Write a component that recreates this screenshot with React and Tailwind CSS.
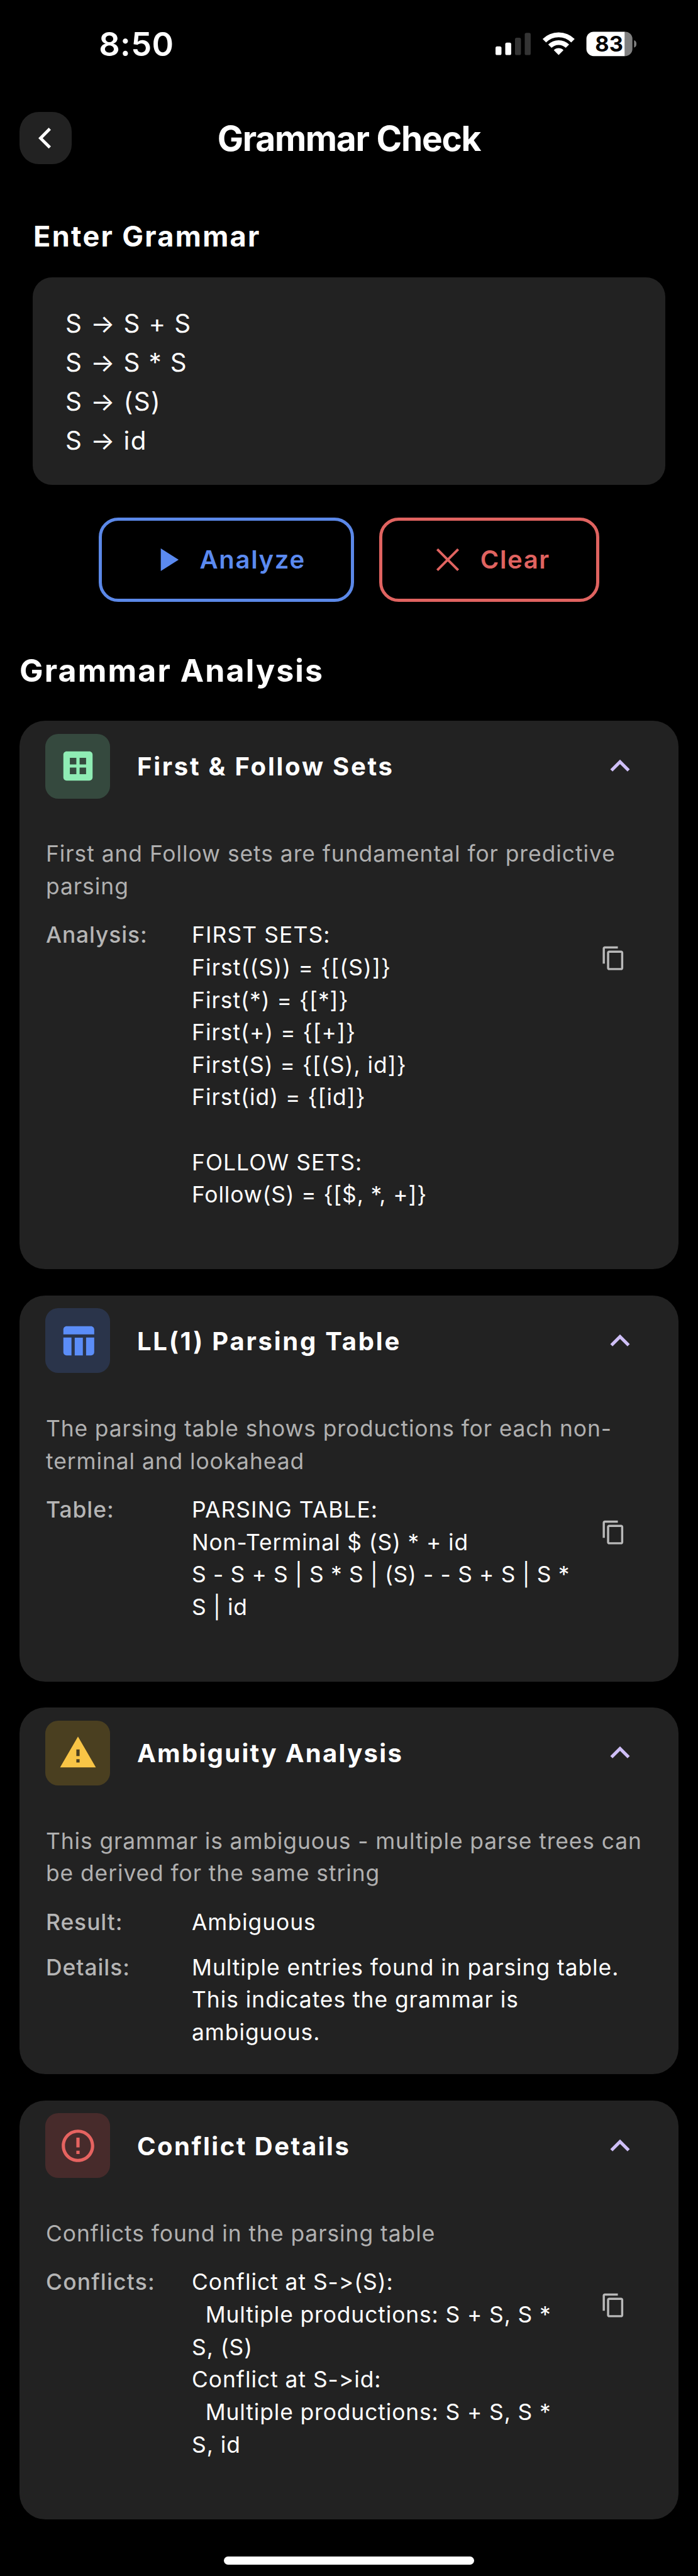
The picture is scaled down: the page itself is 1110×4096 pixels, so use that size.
const ICONS = {
  dataset:
    'M19 3H5c-1.1 0-2 .9-2 2v14c0 1.1.9 2 2 2h14c1.1 0 2-.9 2-2V5c0-1.1-.9-2-2-2zm-8 14H7v-4h4v4zm0-6H7V7h4v4zm6 6h-4v-4h4v4zm0-6h-4V7h4v4z',
  table:
    'M10 10.02h5V21h-5zM17 21h3c1.1 0 2-.9 2-2v-9h-5v11zm3-18H5c-1.1 0-2 .9-2 2v3h19V5c0-1.1-.9-2-2-2zM3 19c0 1.1.9 2 2 2h3V10H3v9z',
  warning: 'M1 21h22L12 2 1 21zm12-3h-2v-2h2v2zm0-4h-2v-4h2v4z',
  error:
    'M11 15h2v2h-2zm0-8h2v6h-2zm.99-5C6.47 2 2 6.48 2 12s4.47 10 9.99 10C17.52 22 22 17.52 22 12S17.52 2 11.99 2zM12 20c-4.42 0-8-3.58-8-8s3.58-8 8-8 8 3.58 8 8-3.58 8-8 8z',
  expandLess: 'M12 8l-6 6 1.41 1.41L12 10.83l4.59 4.58L18 14z',
  close:
    'M19 6.1L17.9 5 12 10.9 6.1 5 5 6.1 10.9 12 5 17.9 6.1 19 12 13.1 17.9 19 19 17.9 13.1 12z',
  play: 'M8 5v14l11-7z',
  copy: 'M16 1H4c-1.1 0-2 .9-2 2v14h2V3h12V1zm3 4H8c-1.1 0-2 .9-2 2v14c0 1.1.9 2 2 2h11c1.1 0 2-.9 2-2V7c0-1.1-.9-2-2-2zm0 16H8V7h11v14z',
};

function Icon({ name, className }) {
  return (
    <svg viewBox="0 0 24 24" fill="currentColor" className={className}>
      <path d={ICONS[name]} />
    </svg>
  );
}

function StatusBar() {
  return (
    <div className="flex h-[178px] shrink-0 items-start justify-between pr-[97.2px] pl-[157.2px]">
      <div className="pt-[40px] text-[52.4px] leading-[60px] font-semibold tracking-[0.4px]">8:50</div>
      <svg viewBox="108 44 783 215" className="mt-[38.5px] h-[61.7px] w-[224.6px]">
        <rect x="108" y="165" width="33" height="48" rx="9" fill="#fff" />
        <rect x="162" y="144" width="33" height="69" rx="9" fill="#fff" />
        <rect x="216" y="117" width="33" height="96" rx="9" fill="#343434" />
        <rect x="270" y="90" width="33" height="123" rx="9" fill="#343434" />
        <path d="M378.8 133.8A112 112 0 0 1 537.2 133.8" fill="none" stroke="#fff" strokeWidth="27" />
        <path d="M409.2 164.2A69 69 0 0 1 506.8 164.2" fill="none" stroke="#fff" strokeWidth="26" />
        <path d="M458 213L431.1 186.1A38 38 0 0 1 484.9 186.1Z" fill="#fff" />
        <path d="M652 84H825V219H652A40 40 0 0 1 612 179V124A40 40 0 0 1 652 84Z" fill="#fff" />
        <path d="M825 84H827A40 40 0 0 1 867 124V179A40 40 0 0 1 827 219H825Z" fill="#808080" />
        <path d="M876 131A17 21 0 0 1 876 172Z" fill="#808080" />
        <text x="660" y="195" fontSize="120" fontWeight="700" fill="#000">
          83
        </text>
      </svg>
    </div>
  );
}

function Header() {
  return (
    <div className="flex h-[82.6px] shrink-0 items-center px-[31px]">
      <div className="flex size-[82.6px] items-center justify-center rounded-[31px] bg-[#222222]">
        <svg viewBox="0 0 23.3 38.7" fill="#fff" className="mr-[2px] h-[33.3px] w-[20px]">
          <path d="M19.3 0L23.3 4L8 19.35L23.3 34.7L19.3 38.7L0 19.35Z" />
        </svg>
      </div>
      <h1 className="flex-1 pt-[1px] text-center text-[55.1px] leading-[82.6px] font-bold tracking-[-1.29px]">
        Grammar Check
      </h1>
      <div className="w-[82.6px]" />
    </div>
  );
}

function ActionButton({ icon, label, className }) {
  return (
    <button
      className={`flex h-[134.3px] items-center rounded-[31px] border-[5.2px] pl-[72.8px] text-[40.06px] font-semibold ${className}`}
    >
      <Icon name={icon} className="mr-[20.6px] size-[62px]" />
      {label}
    </button>
  );
}

function Row({ label, labelClass = 'tracking-[0.95px]', lines, copy }) {
  return (
    <div className={`flex ${copy ? 'pb-[51.6px]' : ''}`}>
      <div className={`w-[232px] shrink-0 font-medium text-[#b5b5b5] ${labelClass}`}>{label}</div>
      <div className="flex-1 text-white">
        {lines.map(([text, tracking], i) => (
          <div key={i} className={`h-[51.61px] whitespace-pre ${tracking || 'tracking-[0.96px]'}`}>
            {text}
          </div>
        ))}
      </div>
      {copy && (
        <div className="flex size-[123.9px] shrink-0 items-center justify-center">
          <Icon name="copy" className="size-[41.3px] text-[#b9b9b9]" />
        </div>
      )}
    </div>
  );
}

function Card({ icon, iconClass, title, titleClass, description, rows }) {
  return (
    <section className="rounded-[41px] bg-[#222222] px-[41.3px] pt-[20.64px] pb-[40.8px]">
      <div className="flex h-[103.2px] items-center pr-[20.7px]">
        <div className={`flex size-[103.2px] items-center justify-center rounded-[20.6px] ${iconClass}`}>
          <Icon name={icon} className="size-[62px]" />
        </div>
        <h3 className={`flex-1 pt-[1.8px] pl-[42.4px] text-[40.06px] leading-[60px] font-bold ${titleClass}`}>
          {title}
        </h3>
        <Icon name="expandLess" className="size-[62px] text-[#cfbff7]" />
      </div>
      <div className="mt-[62.6px] pl-[0.7px] text-[35.4px] leading-[51.61px] whitespace-pre">
        <div className="text-[#b0b0b0]">
          {description.map(([text, tracking]) => (
            <div key={text} className={`h-[51.61px] ${tracking}`}>
              {text}
            </div>
          ))}
        </div>
        <div className="mt-[25.8px] flex flex-col gap-[20.64px]">
          {rows.map((row) => (
            <Row key={row.label} {...row} />
          ))}
        </div>
      </div>
    </section>
  );
}

const CARDS = [
  {
    icon: 'dataset',
    iconClass: 'bg-[#35493e] text-[#8fecb4]',
    title: 'First & Follow Sets',
    titleClass: 'tracking-[2.75px]',
    description: [
      ['First and Follow sets are fundamental for predictive', 'tracking-[0.95px]'],
      ['parsing', 'tracking-[0.97px]'],
    ],
    rows: [
      {
        label: 'Analysis:',
        labelClass: 'tracking-[0.87px]',
        copy: true,
        lines: [
          ['FIRST SETS:', 'tracking-[1.1px]'],
          ['First((S)) = {[(S)]}', 'tracking-[1.1px]'],
          ['First(*) = {[*]}', 'tracking-[1px]'],
          ['First(+) = {[+]}', 'tracking-[1px]'],
          ['First(S) = {[(S), id]}', 'tracking-[1px]'],
          ['First(id) = {[id]}', 'tracking-[1px]'],
          [' '],
          ['FOLLOW SETS:', 'tracking-[1.05px]'],
          ['Follow(S) = {[$, *, +]}', 'tracking-[0.85px]'],
        ],
      },
    ],
  },
  {
    icon: 'table',
    iconClass: 'bg-[#2a344a] text-[#5b8df8]',
    title: 'LL(1) Parsing Table',
    titleClass: 'tracking-[2.75px]',
    description: [
      ['The parsing table shows productions for each non-', 'tracking-[0.88px]'],
      ['terminal and lookahead', 'tracking-[0.92px]'],
    ],
    rows: [
      {
        label: 'Table:',
        copy: true,
        lines: [
          ['PARSING TABLE:', 'tracking-[1.05px]'],
          ['Non-Terminal $ (S) * + id', 'tracking-[0.87px]'],
          ['S - S + S | S * S | (S) - - S + S | S *', 'tracking-[0.65px]'],
          ['S | id', 'tracking-[0.65px]'],
        ],
      },
    ],
  },
  {
    icon: 'warning',
    iconClass: 'bg-[#4a3f20] text-[#f8c546]',
    title: 'Ambiguity Analysis',
    titleClass: 'tracking-[2.3px]',
    description: [
      ['This grammar is ambiguous - multiple parse trees can', 'tracking-[0.9px]'],
      ['be derived for the same string', 'tracking-[0.92px]'],
    ],
    rows: [
      { label: 'Result:', lines: [['Ambiguous']] },
      {
        label: 'Details:',
        lines: [
          ['Multiple entries found in parsing table.', 'tracking-[0.94px]'],
          ['This indicates the grammar is'],
          ['ambiguous.'],
        ],
      },
    ],
  },
  {
    icon: 'error',
    iconClass: 'bg-[#472b2b] text-[#e66360]',
    title: 'Conflict Details',
    titleClass: 'tracking-[2.5px]',
    description: [['Conflicts found in the parsing table', 'tracking-[0.95px]']],
    rows: [
      {
        label: 'Conflicts:',
        labelClass: 'tracking-[1.2px]',
        copy: true,
        lines: [
          ['Conflict at S->(S):'],
          ['  Multiple productions: S + S, S *', 'tracking-[0.88px]'],
          ['S, (S)'],
          ['Conflict at S->id:'],
          ['  Multiple productions: S + S, S *', 'tracking-[0.88px]'],
          ['S, id'],
        ],
      },
    ],
  },
];

const PRODUCTIONS = ['S → S + S', 'S → S * S', 'S → (S)', 'S → id'];

export default function App() {
  return (
    <div className="flex h-[4096px] w-[1110px] flex-col overflow-hidden bg-black font-['Inter',sans-serif] text-white [font-feature-settings:'calt'_0]">
      <StatusBar />
      <Header />
      <h2 className="mt-[88.2px] pl-[53px] text-[45.07px] leading-[54px] font-bold tracking-[2.3px]">
        Enter Grammar
      </h2>
      <div className="mx-[51.6px] mt-[38.3px] h-[330.4px] shrink-0 rounded-[31px] bg-[#222222] pt-[42.8px] pl-[52.4px] text-[40.4px] leading-[61.93px] tracking-[1.35px]">
        {PRODUCTIONS.map((line) => (
          <div key={line}>{line}</div>
        ))}
      </div>
      <div className="mt-[51.4px] flex justify-center gap-[40.6px]">
        <ActionButton
          icon="play"
          label="Analyze"
          className="w-[405.7px] border-[#5b88e8] tracking-[1.65px] text-[#5b8af0]"
        />
        <ActionButton
          icon="close"
          label="Clear"
          className="w-[349.4px] border-[#e06360] tracking-[1.6px] text-[#e06360]"
        />
      </div>
      <h2 className="mt-[79px] pl-[31px] text-[50.07px] leading-[60px] font-bold tracking-[2.1px]">
        Grammar Analysis
      </h2>
      <div className="mx-[31px] mt-[49.8px] flex flex-col gap-[41.3px]">
        {CARDS.map((card) => (
          <Card key={card.title} {...card} />
        ))}
      </div>
      <div className="mx-auto mt-[59px] h-[13px] w-[397.5px] shrink-0 rounded-full bg-white" />
    </div>
  );
}
